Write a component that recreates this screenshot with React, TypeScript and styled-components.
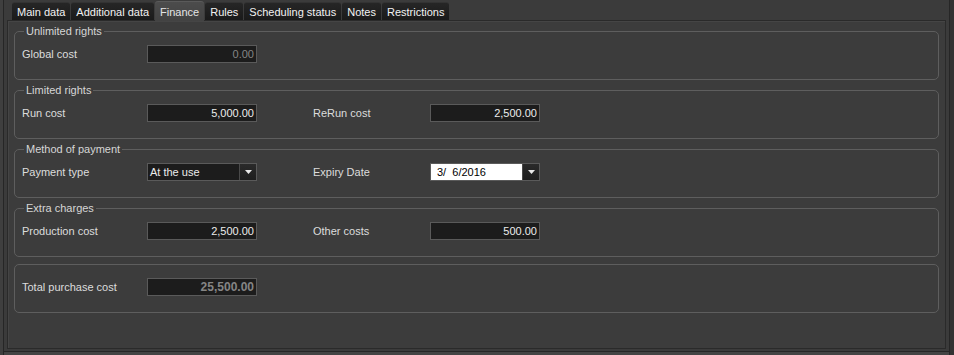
import React from "react";
import styled, { createGlobalStyle } from "styled-components";

const GlobalStyle = createGlobalStyle`
  html, body {
    margin: 0;
    padding: 0;
    background: #3b3b3b;
  }
  body {
    font-family: "Liberation Sans", Arial, sans-serif;
    font-size: 11px;
  }
`;

const Window = styled.div`
  width: 954px;
  height: 355px;
  box-sizing: border-box;
  background: #3b3b3b;
  padding: 0 8px 6px 7px;
  display: flex;
  flex-direction: column;
  box-shadow: inset 3px 0 0 #3f3f3f, inset 4px 0 0 #262626, inset -4px 0 0 #333,
    inset -5px 0 0 #262626, inset 0 -3px 0 #444, inset 0 -4px 0 #262626;
`;

const TabStrip = styled.div`
  height: 20px;
  display: flex;
  align-items: flex-end;
  gap: 1px;
  padding-left: 5px;
  box-sizing: border-box;
`;

const Tab = styled.div<{ $active?: boolean }>`
  height: ${(p) => (p.$active ? "20px" : "18px")};
  padding: 0 ${(p) => (p.$active ? "5px" : "5px")};
  display: flex;
  align-items: center;
  color: ${(p) => (p.$active ? "#e4e4e4" : "#f2f2f2")};
  background: ${(p) =>
    p.$active
      ? "linear-gradient(#4c4c4c, #424242)"
      : "linear-gradient(#262626, #1a1a1a)"};
  border-top: 1px solid ${(p) => (p.$active ? "#5a5a5a" : "#333")};
  border-radius: 3px 3px 0 0;
  box-sizing: border-box;
  white-space: nowrap;
  margin-bottom: ${(p) => (p.$active ? "-1px" : "0")};
  position: relative;
  z-index: ${(p) => (p.$active ? 1 : 0)};
`;

const Panel = styled.div`
  flex: 1;
  border: 1px solid #2a2a2a;
  box-shadow: inset 1px 1px 0 #454545;
  background: #3c3c3c;
  padding: 4px 6px 0 6px;
  display: flex;
  flex-direction: column;
  gap: 4px;
`;

const Group = styled.fieldset<{ $h: number; $top?: number }>`
  margin: ${(p) => p.$top ?? 0}px 0 0 0;
  padding: 7px 7px 0 7px;
  border: 1px solid #5e5e5e;
  border-radius: 5px;
  height: ${(p) => p.$h}px;
  box-sizing: border-box;
  min-width: 0;
`;

const Legend = styled.legend`
  color: #d6d6d6;
  font-size: 11px;
  line-height: 13px;
  padding: 0 2px;
  margin-left: 2px;
`;

const Row = styled.div`
  display: flex;
  align-items: center;
  height: 18px;
`;

const Label = styled.div<{ $w: number; $indent?: number }>`
  width: ${(p) => p.$w}px;
  margin-left: ${(p) => p.$indent ?? 0}px;
  color: #dcdcdc;
  white-space: nowrap;
`;

const Field = styled.div<{ $dim?: boolean; $big?: boolean }>`
  width: 110px;
  height: 18px;
  box-sizing: border-box;
  border: 1px solid #5a5a5a;
  background: #1c1c1c;
  color: ${(p) => (p.$dim ? "#858585" : "#ececec")};
  font-size: ${(p) => (p.$big ? "12px" : "11px")};
  font-weight: ${(p) => (p.$big ? "bold" : "normal")};
  text-align: right;
  padding-right: 2px;
  line-height: 16px;
`;

const Combo = styled.div<{ $light?: boolean }>`
  width: 110px;
  height: 18px;
  box-sizing: border-box;
  display: flex;
  border: 1px solid #5a5a5a;
  background: #1c1c1c;
`;

const ComboText = styled.div<{ $light?: boolean }>`
  flex: 1;
  background: ${(p) => (p.$light ? "#ffffff" : "#1c1c1c")};
  color: ${(p) => (p.$light ? "#000" : "#ececec")};
  padding-left: ${(p) => (p.$light ? "6px" : "2px")};
  line-height: 16px;
  white-space: pre;
`;

const DropButton = styled.div`
  width: 16px;
  display: flex;
  align-items: center;
  justify-content: center;
  background: linear-gradient(#2a2a2a, #1e1e1e);
  border-left: 1px solid #4a4a4a;
`;

const Arrow = () => (
  <svg width="7" height="4" viewBox="0 0 7 4">
    <path d="M0 0 H7 L3.5 4 Z" fill="#e8e8e8" />
  </svg>
);

const tabs = [
  "Main data",
  "Additional data",
  "Finance",
  "Rules",
  "Scheduling status",
  "Notes",
  "Restrictions",
];

export default function App() {
  return (
    <>
      <GlobalStyle />
      <Window>
        <TabStrip>
          {tabs.map((t) => (
            <Tab key={t} $active={t === "Finance"}>
              {t}
            </Tab>
          ))}
        </TabStrip>
        <Panel>
          <Group $h={55}>
            <Legend>Unlimited rights</Legend>
            <Row>
              <Label $w={125}>Global cost</Label>
              <Field $dim>0.00</Field>
            </Row>
          </Group>
          <Group $h={55}>
            <Legend>Limited rights</Legend>
            <Row>
              <Label $w={125}>Run cost</Label>
              <Field>5,000.00</Field>
              <Label $w={117} $indent={56}>
                ReRun cost
              </Label>
              <Field>2,500.00</Field>
            </Row>
          </Group>
          <Group $h={55}>
            <Legend>Method of payment</Legend>
            <Row>
              <Label $w={125}>Payment type</Label>
              <Combo>
                <ComboText>At the use</ComboText>
                <DropButton>
                  <Arrow />
                </DropButton>
              </Combo>
              <Label $w={117} $indent={56}>
                Expiry Date
              </Label>
              <Combo>
                <ComboText $light>{"3/  6/2016"}</ComboText>
                <DropButton>
                  <Arrow />
                </DropButton>
              </Combo>
            </Row>
          </Group>
          <Group $h={55}>
            <Legend>Extra charges</Legend>
            <Row>
              <Label $w={125}>Production cost</Label>
              <Field>2,500.00</Field>
              <Label $w={117} $indent={56}>
                Other costs
              </Label>
              <Field>500.00</Field>
            </Row>
          </Group>
          <Group $h={49} $top={3} style={{ paddingTop: 13 }}>
            <Row>
              <Label $w={125}>Total purchase cost</Label>
              <Field $dim $big>
                25,500.00
              </Field>
            </Row>
          </Group>
        </Panel>
      </Window>
    </>
  );
}
